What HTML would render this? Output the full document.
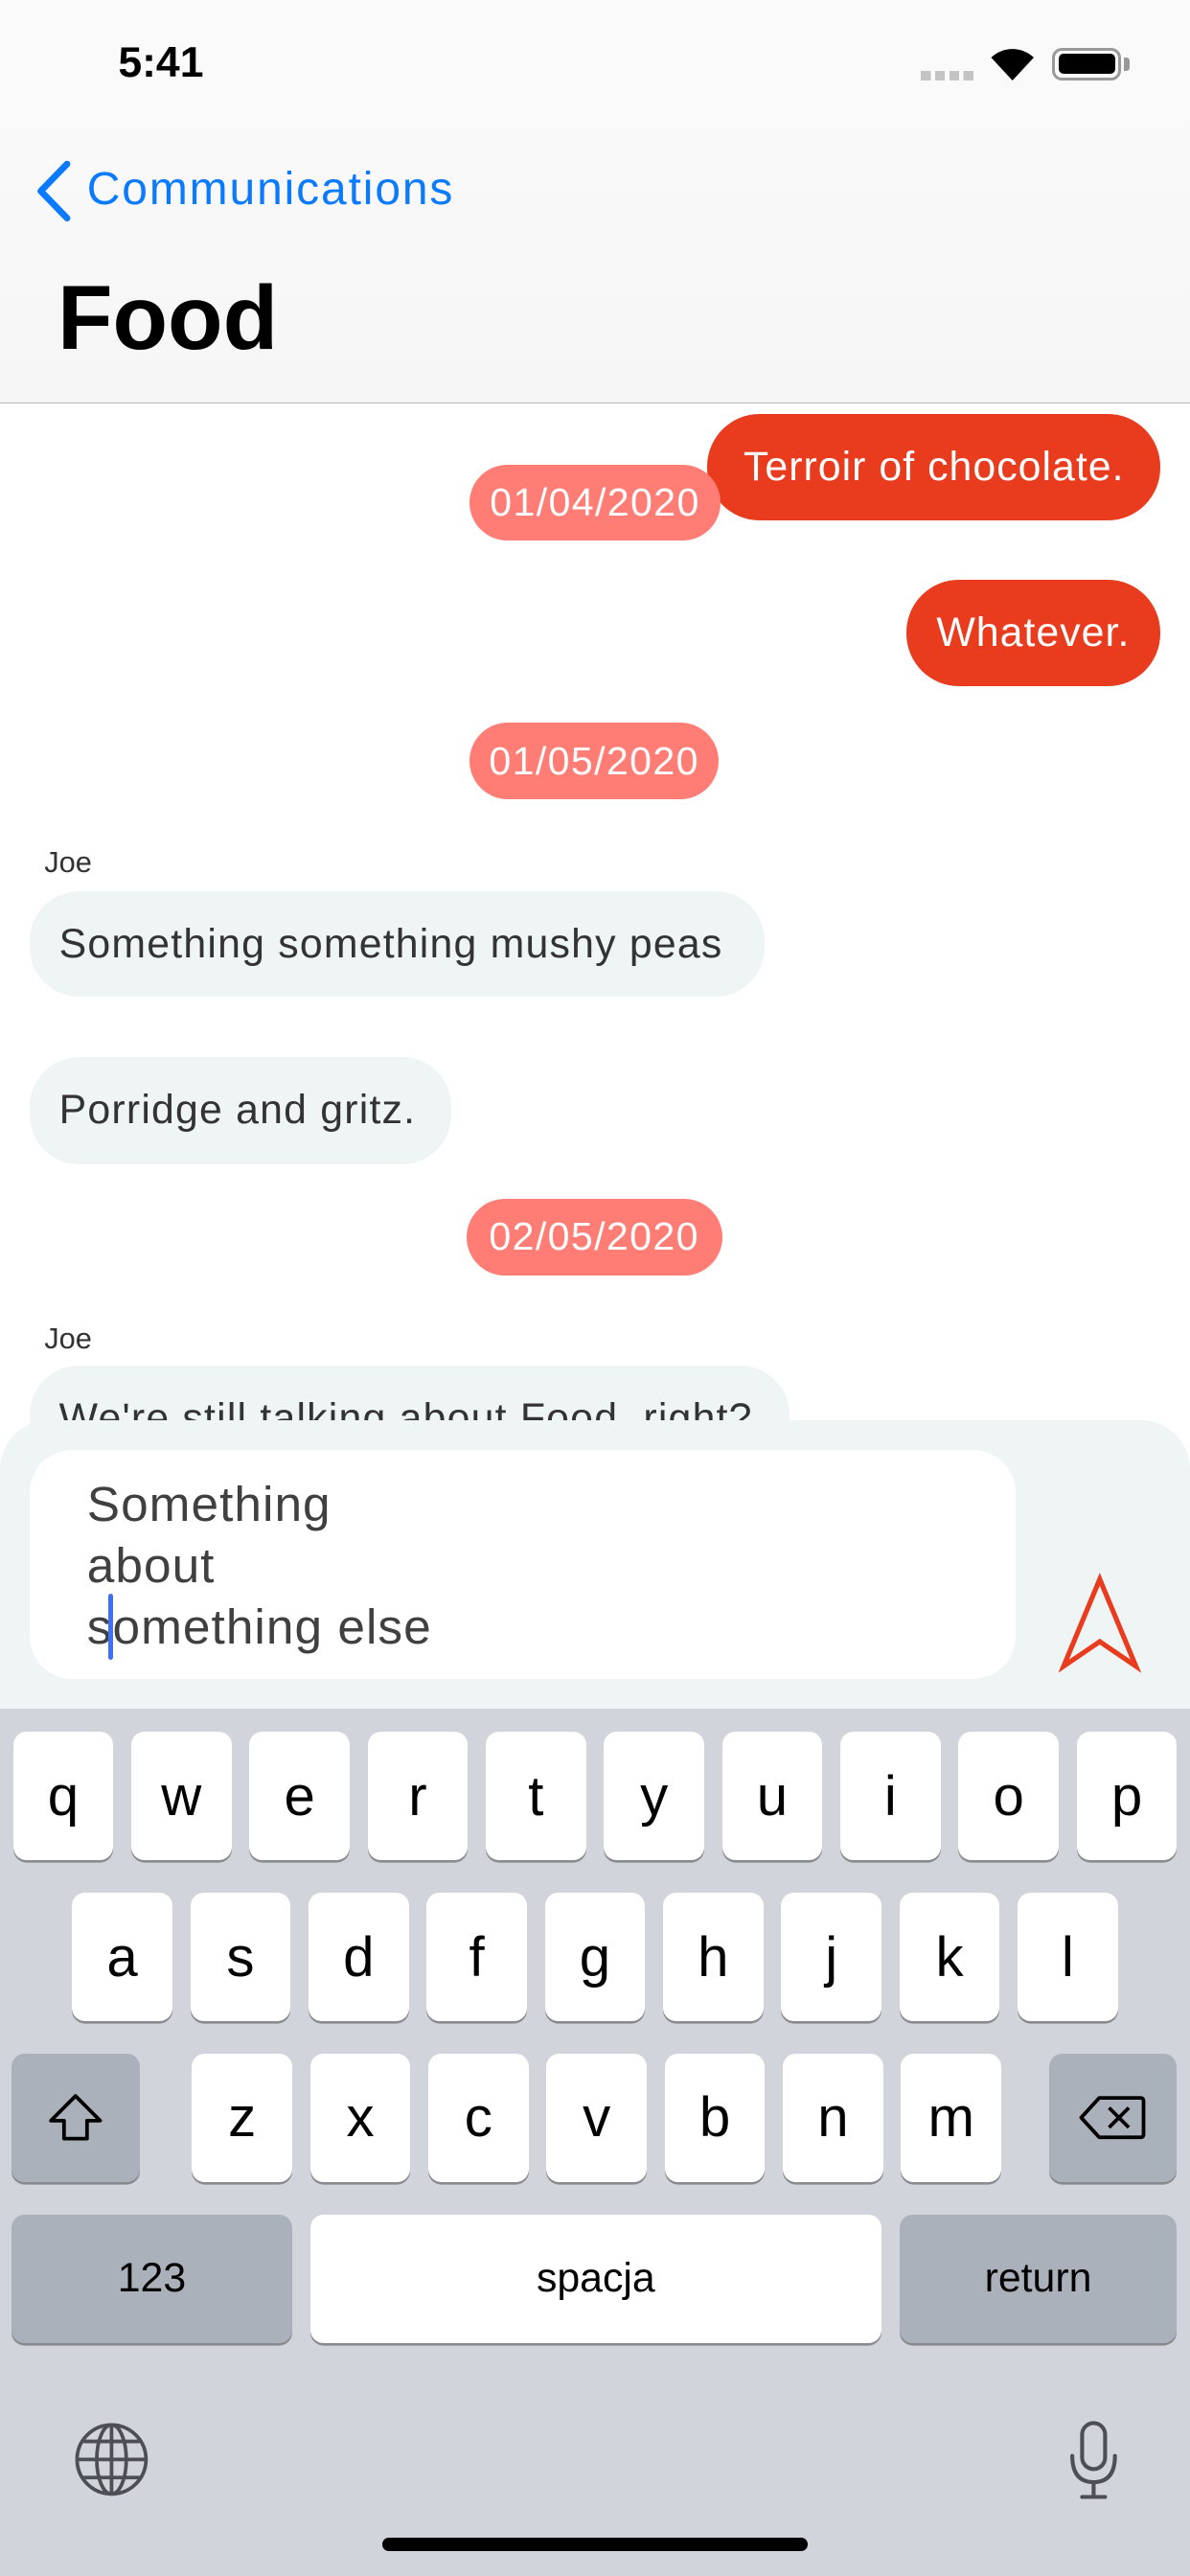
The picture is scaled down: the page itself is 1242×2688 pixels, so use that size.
<!DOCTYPE html>
<html><head><meta charset="utf-8"><style>
html,body{margin:0;padding:0;width:1242px;height:2688px;overflow:hidden;background:#fff}
#w{zoom:1.71310;position:relative;width:725px;height:1569px;font-family:"Liberation Sans",sans-serif;overflow:hidden}
.a{position:absolute}
.red{background:#e93b1e;color:#fff;border-radius:32px;font-size:25px;letter-spacing:0.6px;display:flex;align-items:center;justify-content:center}
.date{background:#ff7d75;color:#fff;border-radius:24px;font-size:24px;letter-spacing:0.8px;display:flex;align-items:center;justify-content:center}
.gray{background:#eff4f4;color:#333;border-radius:30px;font-size:25px;letter-spacing:0.7px;display:flex;align-items:center;padding-left:18px;box-sizing:border-box;white-space:nowrap}
.lbl{font-size:18px;color:#333}
.k{position:absolute;background:#fff;border-radius:8px;box-shadow:0 1.5px 0 #898a8d;display:flex;align-items:center;justify-content:center;font-size:34px;color:#000;width:61px;height:78px}
.s{background:#abb1bb}
</style></head><body><div id="w">
<div class="a" style="left:0;top:0;width:725px;height:245px;background:linear-gradient(180deg,#fbfbfb,#f6f6f6)"></div>
<div class="a" style="left:0;top:245px;width:725px;height:1px;background:#b8b8b8"></div>
<div class="a" style="left:72px;top:24px;font-size:26px;font-weight:bold">5:41</div>
<div class="a" style="left:561px;top:43px;width:32px;height:6px;background:repeating-linear-gradient(90deg,#c4c4c4 0 6px,transparent 6px 8.7px)"></div>
<svg class="a" style="left:602px;top:28px" width="30" height="22" viewBox="0 0 30 22"><path d="M15 21 L2 7 A19 19 0 0 1 28 7 Z" fill="#000"/></svg>
<div class="a" style="left:641px;top:29px;width:42px;height:20px;border:2px solid #999;border-radius:6px;box-sizing:border-box"><div style="margin:2px;height:12px;background:#000;border-radius:3px"></div></div>
<div class="a" style="left:685px;top:35px;width:3px;height:8px;background:#999;border-radius:0 2px 2px 0"></div>
<svg class="a" style="left:20px;top:97px" width="26" height="40" viewBox="0 0 26 40"><path d="M21 3 L5 19.5 L21 36" stroke="#0a7aff" stroke-width="4" fill="none" stroke-linecap="round" stroke-linejoin="round"/></svg>
<div class="a" style="left:53px;top:99px;font-size:28px;letter-spacing:1.1px;color:#0a7aff">Communications</div>
<div class="a" style="left:35px;top:162px;font-size:55px;font-weight:bold;letter-spacing:0px">Food</div>

<div class="a red" style="left:431px;top:252px;width:276px;height:65px">Terroir of chocolate.</div>
<div class="a date" style="left:286px;top:283px;width:153px;height:46px">01/04/2020</div>
<div class="a red" style="left:552px;top:353px;width:155px;height:65px">Whatever.</div>
<div class="a date" style="left:286px;top:440px;width:152px;height:47px">01/05/2020</div>
<div class="a lbl" style="left:27px;top:515px">Joe</div>
<div class="a gray" style="left:18px;top:543px;width:448px;height:64px">Something something mushy peas</div>
<div class="a gray" style="left:18px;top:644px;width:257px;height:65px">Porridge and gritz.</div>
<div class="a date" style="left:284px;top:730px;width:156px;height:47px">02/05/2020</div>
<div class="a lbl" style="left:27px;top:805px">Joe</div>
<div class="a gray" style="left:18px;top:832px;width:463px;height:65px;align-items:flex-start;padding-top:18px">We're still talking about Food, right?</div>

<div class="a" style="left:0;top:865px;width:725px;height:190px;background:#eff4f4;border-radius:30px 30px 0 0"></div>
<div class="a" style="left:18px;top:883px;width:601px;height:140px;background:#fff;border-radius:26px"></div>
<div class="a" style="left:53px;top:897px;font-size:30px;letter-spacing:0.6px;line-height:37.5px;color:#404040">Something<br>about<br>something else</div>
<div class="a" style="left:66px;top:971px;width:3px;height:40px;background:#3e6ff5;border-radius:2px"></div>
<svg class="a" style="left:645px;top:958px" width="50" height="62" viewBox="0 0 50 62"><path d="M25 4 L47 57 L25 42 L3 57 Z" stroke="#e93b1e" stroke-width="3" fill="none" stroke-linejoin="miter"/></svg>

<div class="a" style="left:0;top:1041px;width:725px;height:528px;background:#d1d4da"></div>
<div class="k" style="left:8px;top:1055px">q</div><div class="k" style="left:80px;top:1055px">w</div><div class="k" style="left:152px;top:1055px">e</div><div class="k" style="left:224px;top:1055px">r</div><div class="k" style="left:296px;top:1055px">t</div><div class="k" style="left:368px;top:1055px">y</div><div class="k" style="left:440px;top:1055px">u</div><div class="k" style="left:512px;top:1055px">i</div><div class="k" style="left:584px;top:1055px">o</div><div class="k" style="left:656px;top:1055px">p</div>
<div class="k" style="left:44px;top:1153px">a</div><div class="k" style="left:116px;top:1153px">s</div><div class="k" style="left:188px;top:1153px">d</div><div class="k" style="left:260px;top:1153px">f</div><div class="k" style="left:332px;top:1153px">g</div><div class="k" style="left:404px;top:1153px">h</div><div class="k" style="left:476px;top:1153px">j</div><div class="k" style="left:548px;top:1153px">k</div><div class="k" style="left:620px;top:1153px">l</div>
<div class="k s" style="left:7px;top:1251px;width:78px"><svg width="36" height="32" viewBox="0 0 36 32"><path d="M18 3 L33 18 L25 18 L25 29 L11 29 L11 18 L3 18 Z" stroke="#000" stroke-width="2.2" fill="none" stroke-linejoin="round"/></svg></div>
<div class="k" style="left:117px;top:1251px">z</div><div class="k" style="left:189px;top:1251px">x</div><div class="k" style="left:261px;top:1251px">c</div><div class="k" style="left:333px;top:1251px">v</div><div class="k" style="left:405px;top:1251px">b</div><div class="k" style="left:477px;top:1251px">n</div><div class="k" style="left:549px;top:1251px">m</div>
<div class="k s" style="left:639px;top:1251px;width:78px"><svg width="42" height="30" viewBox="0 0 42 30"><path d="M13 3 L38 3 Q40 3 40 5 L40 25 Q40 27 38 27 L13 27 L2 15 Z" stroke="#000" stroke-width="2.2" fill="none" stroke-linejoin="round"/><path d="M19 9 L31 21 M31 9 L19 21" stroke="#000" stroke-width="2.2"/></svg></div>
<div class="k s" style="left:7px;top:1349px;width:171px;font-size:25px">123</div>
<div class="k" style="left:189px;top:1349px;width:348px;font-size:25px">spacja</div>
<div class="k s" style="left:548px;top:1349px;width:169px;font-size:25px">return</div>
<svg class="a" style="left:45px;top:1475px" width="46" height="46" viewBox="0 0 46 46"><g stroke="#4d4f54" stroke-width="2.2" fill="none"><circle cx="23" cy="23" r="21"/><ellipse cx="23" cy="23" rx="9" ry="21"/><path d="M23 2 V44 M2 23 H44 M6 12 H40 M6 34 H40"/></g></svg>
<svg class="a" style="left:650px;top:1474px" width="32" height="50" viewBox="0 0 32 50"><g stroke="#4d4f54" stroke-width="2.4" fill="none" stroke-linecap="round"><rect x="9" y="2" width="14" height="28" rx="7"/><path d="M3 22 Q3 38 16 38 Q29 38 29 22 M16 38 V47 M9 47 H23"/></g></svg>
<div class="a" style="left:233px;top:1546px;width:259px;height:8px;background:#000;border-radius:4px"></div>
</div></body></html>
